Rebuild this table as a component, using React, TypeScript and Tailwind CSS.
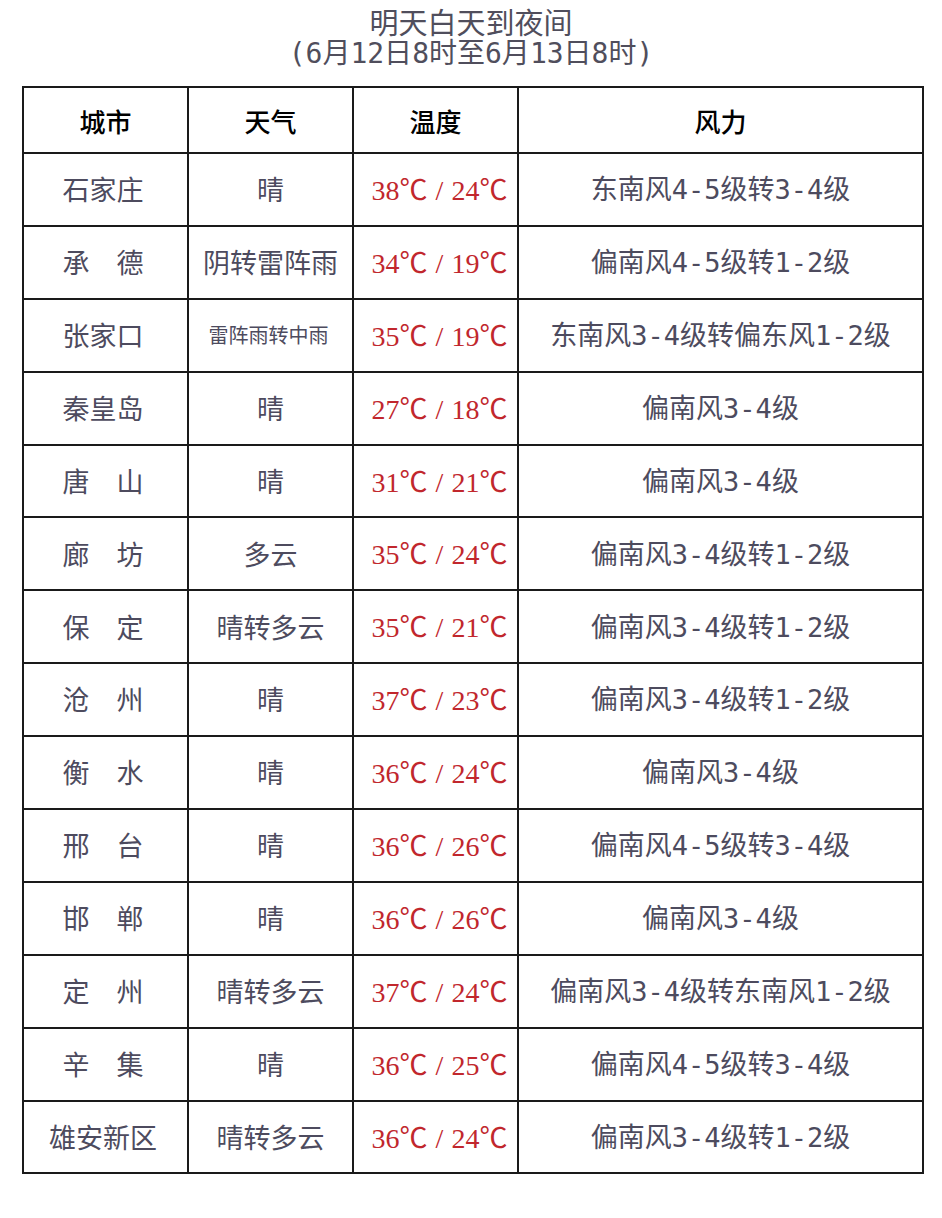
import React from 'react'

type Row = {
  city: string
  weather: string
  small?: boolean
  hi: string
  lo: string
  wind: string
}

const rows: Row[] = [
  { city: '石家庄', weather: '晴', hi: '38', lo: '24', wind: '东南风4-5级转3-4级' },
  { city: '承　德', weather: '阴转雷阵雨', hi: '34', lo: '19', wind: '偏南风4-5级转1-2级' },
  { city: '张家口', weather: '雷阵雨转中雨', small: true, hi: '35', lo: '19', wind: '东南风3-4级转偏东风1-2级' },
  { city: '秦皇岛', weather: '晴', hi: '27', lo: '18', wind: '偏南风3-4级' },
  { city: '唐　山', weather: '晴', hi: '31', lo: '21', wind: '偏南风3-4级' },
  { city: '廊　坊', weather: '多云', hi: '35', lo: '24', wind: '偏南风3-4级转1-2级' },
  { city: '保　定', weather: '晴转多云', hi: '35', lo: '21', wind: '偏南风3-4级转1-2级' },
  { city: '沧　州', weather: '晴', hi: '37', lo: '23', wind: '偏南风3-4级转1-2级' },
  { city: '衡　水', weather: '晴', hi: '36', lo: '24', wind: '偏南风3-4级' },
  { city: '邢　台', weather: '晴', hi: '36', lo: '26', wind: '偏南风4-5级转3-4级' },
  { city: '邯　郸', weather: '晴', hi: '36', lo: '26', wind: '偏南风3-4级' },
  { city: '定　州', weather: '晴转多云', hi: '37', lo: '24', wind: '偏南风3-4级转东南风1-2级' },
  { city: '辛　集', weather: '晴', hi: '36', lo: '25', wind: '偏南风4-5级转3-4级' },
  { city: '雄安新区', weather: '晴转多云', hi: '36', lo: '24', wind: '偏南风3-4级转1-2级' },
]

const cjk = "font-['Noto_Sans_CJK_SC',sans-serif]"
const mono = "font-['DejaVu_Sans_Mono',monospace]"
const cell = 'border-2 border-[#1a1a1a] text-center'

// digits / hyphens / parens get the half-width mono face, the rest stays CJK
const withDigits = (text: string) =>
  text.split(/([0-9()\-]+)/).map((part, i) =>
    /^[0-9()\-]+$/.test(part) ? (
      <span key={i} className={mono}>
        {part}
      </span>
    ) : (
      part
    )
  )

const Temp = ({ hi, lo }: { hi: string; lo: string }) => (
  <span className="font-['Liberation_Serif',serif] text-[28px] text-[#c1272d]">
    {hi}
    <span className={`${cjk} text-[28px]`}>℃</span>
    <span className="mx-[8px]">/</span>
    {lo}
    <span className={`${cjk} text-[28px]`}>℃</span>
  </span>
)

const App: React.FC = () => {
  return (
    <div className={`w-[942px] min-h-[1218px] bg-white pt-[6px] ${cjk}`}>
      {/* Title */}
      <div className="text-center text-[#504e5c] leading-[30px]">
        <p className="text-[29px]">明天白天到夜间</p>
        <p className="text-[28px]">{withDigits('(6月12日8时至6月13日8时)')}</p>
      </div>

      <table className="ml-[22px] mt-[17px] w-[900px] table-fixed border-collapse">
        <colgroup>
          <col className="w-[165px]" />
          <col className="w-[165px]" />
          <col className="w-[165px]" />
          <col className="w-[405px]" />
        </colgroup>
        <thead>
          <tr className="h-[66px] text-[26px] text-black">
            <th className={`${cell} font-medium`}>城市</th>
            <th className={`${cell} font-medium`}>天气</th>
            <th className={`${cell} font-medium`}>温度</th>
            <th className={`${cell} font-medium`}>风力</th>
          </tr>
        </thead>
        <tbody>
          {rows.map((r) => (
            <tr key={r.city} className="h-[72.9px] text-[27px] text-[#4d4b5e]">
              <td className={`${cell} pr-[5px]`}>{r.city}</td>
              <td className={`${cell} ${r.small ? 'text-[20px] pr-[4px]' : ''}`}>
                {r.weather}
              </td>
              <td className={`${cell} pl-[8px]`}>
                <Temp hi={r.hi} lo={r.lo} />
              </td>
              <td className={cell}>{withDigits(r.wind)}</td>
            </tr>
          ))}
        </tbody>
      </table>
    </div>
  )
}

export default App
